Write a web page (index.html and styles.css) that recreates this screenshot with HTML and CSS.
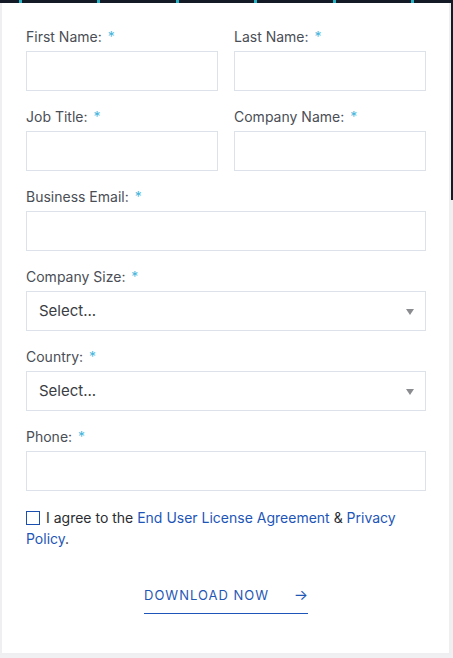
FILE: index.html
```html
<!DOCTYPE html>
<html>
<head>
    <title>Download</title>
    <link rel="stylesheet" href="styles.css">
</head>
<body>
    <div class="page">
        <form class="card">
            <div class="row two">
                <div class="field">
                    <label>First Name: <span class="req">*</span></label>
                    <input type="text" class="input">
                </div>
                <div class="field">
                    <label>Last Name: <span class="req">*</span></label>
                    <input type="text" class="input">
                </div>
            </div>
            <div class="row two">
                <div class="field">
                    <label>Job Title: <span class="req">*</span></label>
                    <input type="text" class="input">
                </div>
                <div class="field">
                    <label>Company Name: <span class="req">*</span></label>
                    <input type="text" class="input">
                </div>
            </div>
            <div class="field">
                <label>Business Email: <span class="req">*</span></label>
                <input type="email" class="input">
            </div>
            <div class="field">
                <label>Company Size: <span class="req">*</span></label>
                <div class="select">Select...<span class="caret"></span></div>
            </div>
            <div class="field">
                <label>Country: <span class="req">*</span></label>
                <div class="select">Select...<span class="caret"></span></div>
            </div>
            <div class="field">
                <label>Phone: <span class="req">*</span></label>
                <input type="tel" class="input">
            </div>

            <p class="agree">
                <span class="check"></span>I agree to the <a href="#">End User License Agreement</a> &amp; <a href="#">Privacy Policy</a>.
            </p>

            <div class="actions">
                <a href="#" class="download">DOWNLOAD NOW <span class="arrow">&rarr;</span></a>
            </div>
        </form>
    </div>
</body>
</html>
```

FILE: styles.css
```css
body {
    margin: 0;
    font-family: 'Inter', 'Noto Sans', sans-serif;
    background: #f0f0f2;
    color: #474b53;
}

/* dark header band behind the card, with the little cyan ticks on top */
.page {
    padding-top: 3px;
    background:
        repeating-linear-gradient(90deg, transparent 0 19px, #27b3c4 19px 22px, transparent 22px 78.4px) top left / 100% 3px no-repeat,
        linear-gradient(#141b27 200px, #f0f0f2 200px);
}

.card {
    box-sizing: border-box;
    width: 451px;
    height: 652px;
    padding: 24px 23px 0 24px;
    background: #fff;
    border: 2px solid #efeff1;
    border-top: none;
}

.row.two {
    display: grid;
    grid-template-columns: 1fr 1fr;
    column-gap: 16px;
}

.field {
    margin-bottom: 16px;
}

.field label {
    display: block;
    font-size: 14px;
    line-height: 20px;
    margin-bottom: 4px;
    color: #4a4e56;
}

.req {
    color: #47b6dc;
    margin-left: 2px;
}

.input,
.select {
    display: block;
    box-sizing: border-box;
    width: 100%;
    height: 40px;
    margin: 0;
    border: 1px solid #dde1ea;
    border-radius: 0;
    background: #fff;
    font-family: inherit;
}

.select {
    position: relative;
    padding: 0 12px;
    font-size: 15px;
    line-height: 38px;
    color: #3a3d43;
}

.caret {
    position: absolute;
    right: 11px;
    top: 17px;
    border-left: 4px solid transparent;
    border-right: 4px solid transparent;
    border-top: 6px solid #8a8c90;
}

.agree {
    margin: 16px 0 0;
    font-size: 14px;
    line-height: 21px;
    color: #2a2d32;
}

.agree a {
    color: #1d56b8;
    text-decoration: none;
}

.check {
    display: inline-block;
    box-sizing: border-box;
    width: 14px;
    height: 14px;
    border: 1.5px solid #1a4fb0;
    margin-right: 6px;
    vertical-align: -2px;
}

.actions {
    margin-top: 35px;
    text-align: center;
}

.download {
    display: inline-block;
    padding-bottom: 8px;
    border-bottom: 1px solid #1d56b8;
    font-size: 13px;
    line-height: 20px;
    letter-spacing: 1px;
    color: #1f57b5;
    text-decoration: none;
}

.arrow {
    margin-left: 20px;
    letter-spacing: 0;
    font-size: 15px;
}
```
